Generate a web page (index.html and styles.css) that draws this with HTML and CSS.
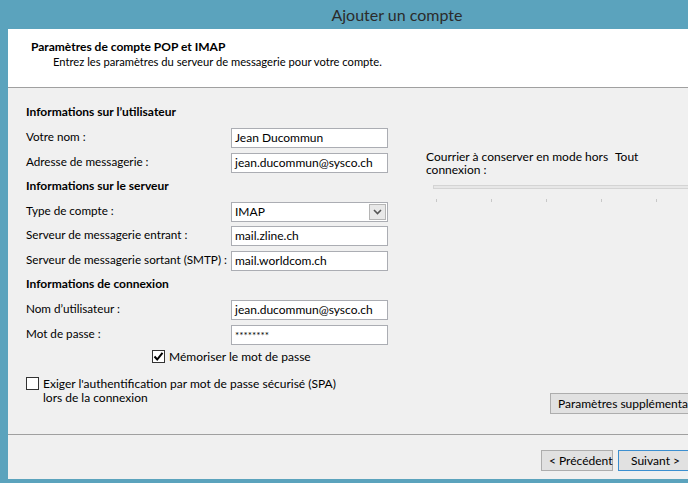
FILE: index.html
```html
<!DOCTYPE html>
<html lang="fr">
<head>
<meta charset="utf-8">
<title>Ajouter un compte</title>
<link rel="stylesheet" href="styles.css">
</head>
<body>
<div class="window">
  <div class="titlebar">Ajouter un compte</div>
  <div class="frame">
    <div class="dialog">
      <div class="header">
        <div class="header-title">Paramètres de compte POP et IMAP</div>
        <div class="header-sub">Entrez les paramètres du serveur de messagerie pour votre compte.</div>
      </div>
      <div class="content">
        <div class="left">
          <div class="section">Informations sur l’utilisateur</div>
          <div class="row first"><span class="label">Votre nom :</span><div class="field">Jean Ducommun</div></div>
          <div class="row"><span class="label">Adresse de messagerie :</span><div class="field">jean.ducommun@sysco.ch</div></div>
          <div class="section">Informations sur le serveur</div>
          <div class="row first"><span class="label">Type de compte :</span><div class="field select">IMAP<span class="drop"><svg width="9" height="6" viewBox="0 0 9 6"><path d="M1 1 L4.5 4.5 L8 1" fill="none" stroke="#555" stroke-width="1.6"/></svg></span></div></div>
          <div class="row tight"><span class="label">Serveur de messagerie entrant :</span><div class="field">mail.zline.ch</div></div>
          <div class="row"><span class="label">Serveur de messagerie sortant (SMTP) :</span><div class="field">mail.worldcom.ch</div></div>
          <div class="section">Informations de connexion</div>
          <div class="row first"><span class="label">Nom d’utilisateur :</span><div class="field">jean.ducommun@sysco.ch</div></div>
          <div class="row"><span class="label">Mot de passe :</span><div class="field pw">********</div></div>
          <div class="check-row remember"><span class="box checked"><svg width="11" height="11" viewBox="0 0 11 11"><path d="M1.5 5.5 L4.2 8.5 L9.5 1.8" fill="none" stroke="#000" stroke-width="2"/></svg></span><span>Mémoriser le mot de passe</span></div>
          <div class="check-row spa"><span class="box"></span><span>Exiger l'authentification par mot de passe sécurisé (SPA)<br>lors de la connexion</span></div>
        </div>
        <div class="right">
          <div class="offline">
            <span class="offline-label">Courrier à conserver en mode hors connexion :</span>
            <span class="offline-value">Tout</span>
          </div>
          <div class="slider">
            <div class="track"></div>
            <div class="ticks"><i></i><i></i><i></i><i></i><i></i><i></i></div>
          </div>
          <div class="more"><button class="btn">Paramètres supplémentaires...</button></div>
        </div>
      </div>
      <div class="footer">
        <button class="btn">&lt; Précédent</button>
        <button class="btn default">Suivant &gt;</button>
        <button class="btn">Annuler</button>
      </div>
    </div>
  </div>
</div>
</body>
</html>
```

FILE: styles.css
```css
* { box-sizing: border-box; }
html, body {
  margin: 0;
  padding: 0;
  width: 688px;
  height: 483px;
  overflow: hidden;
  background: #5ba3bd;
}
body {
  font-family: Lato, "Noto Sans", sans-serif;
  font-size: 12px;
  color: #000;
}
.window {
  width: 794px;
  height: 483px;
  display: flex;
  flex-direction: column;
}
.titlebar {
  height: 29px;
  line-height: 29px;
  text-align: center;
  font-size: 16px;
  color: #2b2b2b;
  flex: none;
}
.frame {
  flex: 1;
  padding: 0 8px 4px 8px;
  display: flex;
}
.dialog {
  flex: 1;
  background: #f0f0f0;
  display: flex;
  flex-direction: column;
}
.header {
  height: 59px;
  background: #fff;
  border-bottom: 1px solid #a0a0a0;
  padding: 10px 0 0 23px;
  flex: none;
}
.header-title {
  font-weight: bold;
  line-height: 15px;
}
.header-sub {
  padding-left: 22px;
  line-height: 15px;
  font-size: 11.2px;
}
.content {
  height: 347px;
  border-bottom: 1px solid #a0a0a0;
  display: flex;
  padding: 16px 0 0 18px;
  flex: none;
}
.left {
  width: 362px;
  flex: none;
}
.section {
  font-weight: bold;
  line-height: 16px;
  margin-top: 5px;
}
.section:first-child { margin-top: 0; }
.row {
  display: flex;
  align-items: flex-start;
  height: 20px;
  margin-top: 5px;
}
.row.first { margin-top: 8px; }
.row.tight { margin-top: 4px; }
.label {
  width: 205px;
  flex: none;
  white-space: nowrap;
  line-height: 16px;
  font-size: 11.7px;
}
.field {
  width: 157px;
  height: 20px;
  background: #fff;
  border: 1px solid #abadb3;
  padding-left: 3px;
  line-height: 18px;
  position: relative;
  white-space: nowrap;
}
.field.pw { font-size: 10px; }
.drop {
  position: absolute;
  right: 1px;
  top: 1px;
  width: 17px;
  height: 16px;
  background: #e8e8e8;
  border: 1px solid #b5b5b5;
  display: flex;
  align-items: center;
  justify-content: center;
}
.check-row {
  display: flex;
  align-items: flex-start;
  line-height: 14px;
}
.remember {
  margin-top: 5px;
  padding-left: 126px;
}
.spa {
  margin-top: 13px;
}
.box {
  width: 13px;
  height: 13px;
  border: 1px solid #333;
  background: #fff;
  margin-right: 4px;
  flex: none;
  display: flex;
  align-items: center;
  justify-content: center;
}
.right {
  margin-left: 38px;
  flex: 1;
  display: flex;
  flex-direction: column;
}
.offline {
  margin-top: 46px;
  display: flex;
  line-height: 13px;
}
.offline-label {
  width: 189px;
  flex: none;
}
.slider {
  margin-top: 9px;
  padding-left: 7px;
}
.track {
  height: 4px;
  background: #e7e7e7;
  border: 1px solid #d4d4d4;
}
.ticks {
  display: flex;
  gap: 54px;
  margin-top: 10px;
  padding-left: 3px;
}
.ticks i {
  display: block;
  width: 1px;
  height: 3px;
  background: #c8c8c8;
}
.more {
  margin-top: 191px;
  padding-left: 124px;
}
.btn {
  font-family: inherit;
  font-size: 12px;
  height: 21px;
  background: #e1e1e1;
  border: 1px solid #adadad;
  padding: 0 7px;
  color: #000;
  line-height: 19px;
  margin: 0;
  white-space: nowrap;
  flex: none;
}
.more .btn { width: 170px; text-align: left; }
.footer {
  flex: 1;
  display: flex;
  align-items: flex-start;
  gap: 5px;
  padding: 15px 0 0 533px;
}
.footer .btn { width: 72px; }
.footer .default {
  width: 75px;
  border-color: #3c8fd0;
}
```
